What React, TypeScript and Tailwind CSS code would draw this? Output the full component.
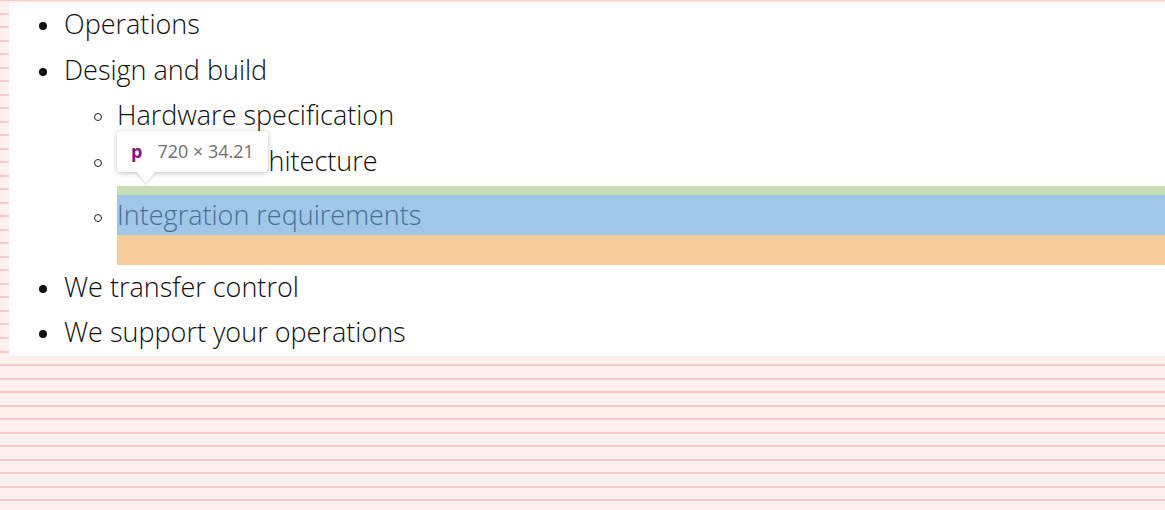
import React from "react";

const textFont = "font-['Open_Sans','Liberation_Sans',sans-serif]";

function Disc() {
  return <span className="block w-[8px] h-[8px] rounded-full bg-[#111111] self-start mt-[18px]" />;
}
function Circle({ mt = "mt-[18px]" }: { mt?: string }) {
  return <span className={`block w-[8px] h-[8px] rounded-full border border-[#222222] self-start ${mt}`} />;
}

export default function App() {
  return (
    <div className="w-[1165px] h-[510px] overflow-hidden relative bg-[repeating-linear-gradient(to_bottom,#fccaca_0px,#fccaca_1px,#fff0f0_1px,#fff0f0_12.52px,#fccaca_12.52px,#fccaca_13.52px)]">
      <div className="pt-[3px] pl-[9px]">
        <div className={`bg-white h-[353px] pt-[1px] ${textFont} font-light text-[27px] leading-[40px] text-[#0f0f0f]`}>
          <ul className="pl-[30px]">
            <li className="flex h-[40px]">
              <span className="w-[25px] flex"><Disc /></span>
              <span>Operations</span>
            </li>
            <li className="mt-[5.7px]">
              <div className="flex h-[40px]">
                <span className="w-[25px] flex"><Disc /></span>
                <span>Design and build</span>
              </div>
              <ul className="pl-[55px]">
                <li className="flex h-[40px] mt-[5.7px]">
                  <span className="w-[23px] flex"><Circle /></span>
                  <span>Hardware specification</span>
                </li>
                <li className="flex h-[40px] mt-[5.7px]">
                  <span className="w-[23px] flex"><Circle /></span>
                  <span>Software architecture</span>
                </li>
                <li className="flex mt-[4.6px]">
                  <span className="w-[23px] flex"><Circle mt="mt-[28px]" /></span>
                  <div className="flex-1 flex flex-col">
                    <div className="h-[9.8px] bg-[#c4dfb8]" />
                    <p className="h-[40px] bg-[#a0c6e8] text-[#4a6f92]">Integration requirements</p>
                    <div className="h-[30px] bg-[#f9cc9d]" />
                  </div>
                </li>
              </ul>
            </li>
            <li className="flex h-[40px] mt-[1.5px]">
              <span className="w-[25px] flex"><Disc /></span>
              <span>We transfer control</span>
            </li>
            <li className="flex h-[40px] mt-[5px]">
              <span className="w-[25px] flex"><Disc /></span>
              <span>We support your operations</span>
            </li>
          </ul>
        </div>
      </div>

      <div className="absolute left-[117px] top-[130.7px] w-[151px] h-[41.3px] bg-white rounded-[4px] shadow-[0_1px_5px_rgba(0,0,0,0.25)] flex items-center pl-[14px] font-['Open_Sans','Liberation_Sans',sans-serif] text-[18px] leading-none">
        <span className="font-bold text-[#881280]">p</span>
        <span className="ml-[15px] text-[#707070]">720 × 34.21</span>
      </div>
      <div className="absolute left-[136px] top-[171px] w-0 h-0 border-l-[10px] border-r-[10px] border-t-[12px] border-l-transparent border-r-transparent border-t-white drop-shadow-[0_2px_1px_rgba(0,0,0,0.12)]" />
    </div>
  );
}
